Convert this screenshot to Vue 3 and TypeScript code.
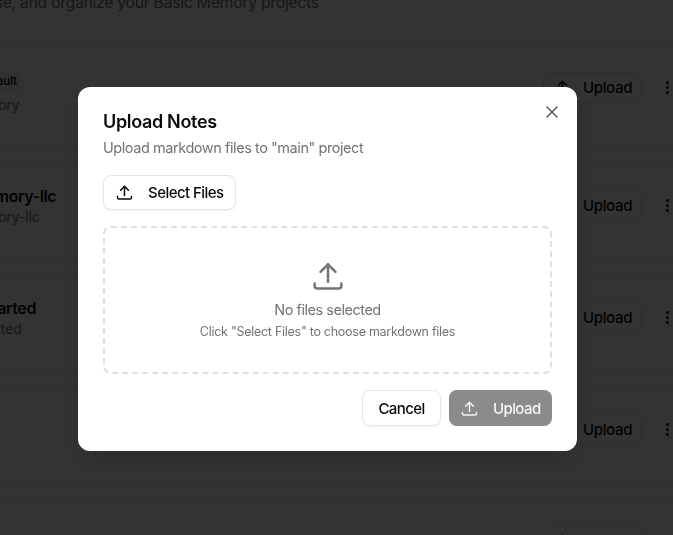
<script setup lang="ts">
interface Project {
  name: string;
  path: string;
  isDefault?: boolean;
}

const projects: Project[] = [
  { name: 'main', path: 'basic-memory', isDefault: true },
  { name: 'basic-memory-llc', path: 'basic-memory-llc' },
  { name: 'getting-started', path: 'getting-started' },
  { name: 'research', path: 'research' },
  { name: 'archive', path: 'archive' },
];

// same tray + arrow everywhere, only the size changes
const uploadPaths = [
  'M4 16.5v1.5a1.5 1.5 0 0 0 1.5 1.5h13a1.5 1.5 0 0 0 1.5-1.5v-1.5',
  'M7.5 9.5l4.5-4.5l4.5 4.5',
  'M12 5v10.5',
];
</script>

<template>
  <div class="page">
    <p class="lead">Create, browse, and organize your Basic Memory projects</p>
    <div class="list">
      <div v-for="project in projects" :key="project.name" class="card">
        <div class="info">
          <div class="name-row">
            <span class="name">{{ project.name }}</span>
            <span v-if="project.isDefault" class="badge">Default</span>
          </div>
          <div class="path">{{ project.path }}</div>
        </div>
        <div class="actions">
          <button class="btn-outline" type="button">
            <svg class="icon" viewBox="0 0 24 24" aria-hidden="true">
              <path v-for="d in uploadPaths" :key="d" :d="d" />
            </svg>
            <span>Upload</span>
          </button>
          <span class="dots"><i></i><i></i><i></i></span>
        </div>
      </div>
    </div>
  </div>

  <div class="overlay">
    <div class="modal">
      <button class="close" type="button" aria-label="Close">
        <svg viewBox="0 0 24 24" aria-hidden="true">
          <path d="M18 6L6 18" />
          <path d="M6 6l12 12" />
        </svg>
      </button>
      <h2 class="title">Upload Notes</h2>
      <p class="subtitle">Upload markdown files to "main" project</p>
      <button class="select" type="button">
        <svg class="icon" viewBox="0 0 24 24" aria-hidden="true">
          <path v-for="d in uploadPaths" :key="d" :d="d" />
        </svg>
        <span>Select Files</span>
      </button>
      <div class="dropzone">
        <svg class="drop-icon" viewBox="0 0 24 24" aria-hidden="true">
          <path v-for="d in uploadPaths" :key="d" :d="d" />
        </svg>
        <div class="empty">No files selected</div>
        <div class="hint">Click "Select Files" to choose markdown files</div>
      </div>
      <div class="footer">
        <button class="cancel" type="button">Cancel</button>
        <button class="submit" type="button">
          <svg class="icon" viewBox="0 0 24 24" aria-hidden="true">
            <path v-for="d in uploadPaths" :key="d" :d="d" />
          </svg>
          <span>Upload</span>
        </button>
      </div>
    </div>
  </div>
</template>

<style>
html,
body {
  overflow: hidden;
  background: #fff;
}
</style>

<style scoped>
* {
  box-sizing: border-box;
}

.page {
  height: 535px;
  overflow: hidden;
  font-family: Inter, "Noto Sans", sans-serif;
  color: #0a0a0a;
}

.lead {
  margin: -10px 0 0 -98px;
  font-size: 16px;
  line-height: 24px;
  letter-spacing: -0.4px;
  white-space: nowrap;
  color: #737373;
}

.list {
  display: flex;
  flex-direction: column;
  gap: 16px;
  margin: 30px -10px 0 -92px;
}

.card {
  display: flex;
  justify-content: space-between;
  align-items: flex-start;
  padding: 22px 13px 30px 16px;
  border: 1px solid #e5e5e5;
  border-radius: 12px;
}

.name-row {
  display: flex;
  align-items: center;
  gap: 8px;
}

.name {
  font-size: 16px;
  line-height: 22px;
  font-weight: 600;
  letter-spacing: -0.4px;
}

.card:first-child .name-row {
  height: 28px;
}

.badge {
  padding: 2px 8px;
  border-radius: 6px;
  background: #f5f5f5;
  font-size: 12px;
  line-height: 16px;
  font-weight: 500;
  letter-spacing: -0.2px;
}

.path {
  font-size: 14px;
  line-height: 20px;
  letter-spacing: -0.15px;
  color: #737373;
}

.actions {
  display: flex;
  align-items: center;
  gap: 24px;
  margin-top: 5px;
}

.btn-outline {
  display: flex;
  align-items: center;
  gap: 10px;
  width: 99px;
  height: 31px;
  padding: 0 0 0 8px;
  border: 1px solid #e5e5e5;
  border-radius: 8px;
  background: #fff;
  font: 500 15px Inter, sans-serif;
  letter-spacing: -0.35px;
  color: #0a0a0a;
}

.dots {
  display: flex;
  flex-direction: column;
  gap: 2px;
}

.dots i {
  width: 3px;
  height: 3px;
  border-radius: 50%;
  background: #0a0a0a;
}

.icon {
  flex: none;
  width: 21px;
  height: 21px;
  fill: none;
  stroke: currentColor;
  stroke-width: 1.7;
  stroke-linecap: round;
  stroke-linejoin: round;
}

.overlay {
  position: fixed;
  inset: 0;
  display: flex;
  align-items: flex-start;
  justify-content: flex-start;
  padding: 87px 0 0 78px;
  background: rgb(0 0 0 / 80%);
  font-family: Inter, "Noto Sans", sans-serif;
}

.modal {
  position: relative;
  display: flex;
  flex-direction: column;
  align-items: flex-start;
  width: 499px;
  height: 364px;
  padding: 25px;
  border-radius: 12px;
  background: #fff;
  box-shadow: 0 8px 24px rgb(0 0 0 / 15%);
}

.close {
  position: absolute;
  top: 15px;
  right: 15px;
  display: flex;
  padding: 0;
  border: 0;
  background: none;
  color: #525252;
}

.close svg {
  width: 20px;
  height: 20px;
  fill: none;
  stroke: currentColor;
  stroke-width: 1.6;
  stroke-linecap: round;
}

.title {
  margin: 0;
  font-size: 18px;
  line-height: 20px;
  font-weight: 600;
  letter-spacing: -0.33px;
  color: #0a0a0a;
}

.subtitle {
  margin: 6px 0 0;
  font-size: 14.5px;
  line-height: 20px;
  letter-spacing: -0.44px;
  color: #737373;
}

.select {
  display: flex;
  align-items: center;
  gap: 13px;
  width: 133px;
  height: 35px;
  margin-top: 17px;
  padding: 0 0 0 10px;
  border: 1px solid #e5e5e5;
  border-radius: 8px;
  background: #fff;
  box-shadow: 0 1px 2px rgb(0 0 0 / 5%);
  font: 500 15px Inter, sans-serif;
  letter-spacing: -0.55px;
  color: #0a0a0a;
}

.dropzone {
  display: flex;
  flex-direction: column;
  align-items: center;
  width: 449px;
  height: 148px;
  margin-top: 16px;
  padding-top: 28px;
  border: 2px dashed #e0e0e0;
  border-radius: 8px;
}

.drop-icon {
  width: 40px;
  height: 40px;
  fill: none;
  stroke: #737373;
  stroke-width: 1.5;
  stroke-linecap: round;
  stroke-linejoin: round;
}

.empty {
  margin-top: 2px;
  font-size: 14.5px;
  line-height: 24px;
  letter-spacing: -0.47px;
  color: #737373;
}

.hint {
  font-size: 12.5px;
  line-height: 20px;
  letter-spacing: -0.27px;
  color: #737373;
}

.footer {
  display: flex;
  justify-content: flex-end;
  gap: 8px;
  width: 449px;
  margin-top: 16px;
}

.cancel,
.submit {
  display: flex;
  align-items: center;
  height: 36px;
  border-radius: 8px;
  font: 500 15px Inter, sans-serif;
  letter-spacing: -0.6px;
}

.cancel {
  justify-content: center;
  width: 79px;
  padding: 0;
  border: 1px solid #e5e5e5;
  background: #fff;
  box-shadow: 0 1px 2px rgb(0 0 0 / 5%);
  color: #0a0a0a;
}

.submit {
  gap: 13px;
  width: 103px;
  padding: 0 0 0 10px;
  border: 0;
  background: #8b8b8b;
  color: #f5f5f5;
}
</style>
